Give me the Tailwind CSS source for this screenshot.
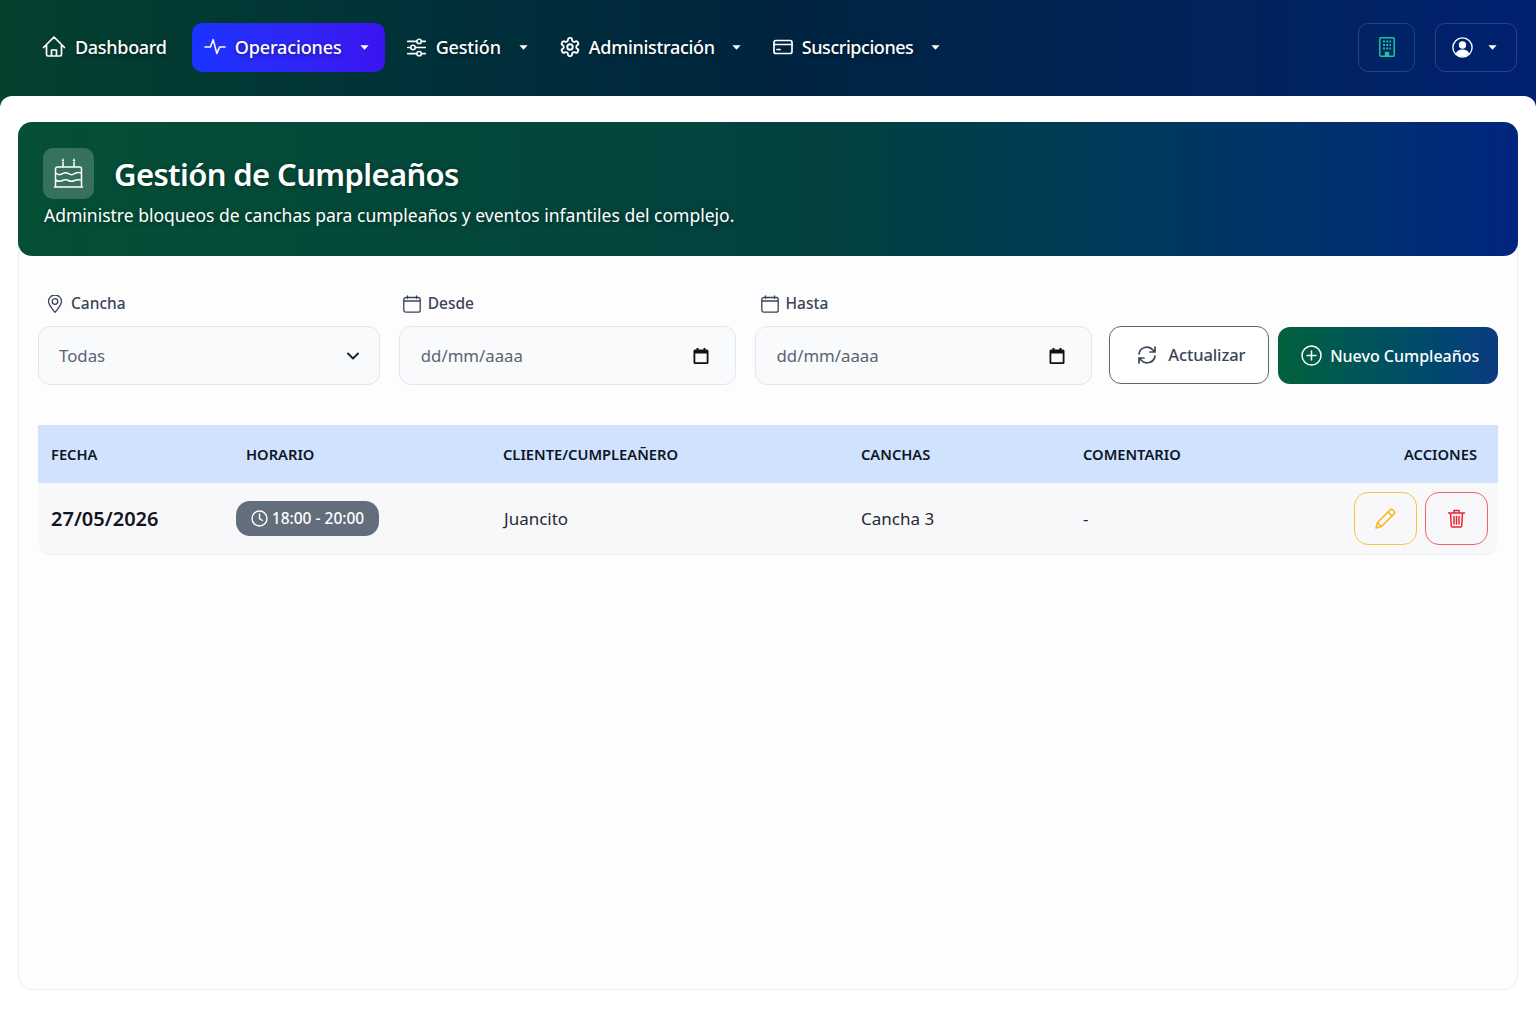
<!DOCTYPE html>
<html lang="es">
<head>
<meta charset="utf-8">
<title>Gestión de Cumpleaños</title>
<script src="https://cdn.jsdelivr.net/npm/@tailwindcss/browser@4"></script>
</head>
<body class="h-[1024px] w-[1536px] overflow-hidden bg-gradient-to-r from-[#06402e] via-[#00243f] to-[#002070] font-['Noto_Sans','Liberation_Sans',sans-serif]">
<nav class="flex h-[96px] items-center pb-[2px] pl-[32px] pr-[19px] text-[18px] font-medium tracking-[-0.3px] text-white [text-shadow:0_1px_4px_rgba(0,0,0,0.45)]">
  <a class="flex h-[49px] items-center gap-[9px] px-[10px]">
    <svg class="size-[24px]" viewBox="0 0 24 24" fill="none" stroke="currentColor" stroke-width="1.7" stroke-linecap="round" stroke-linejoin="round"><path d="M1.500 12.500 12 2l10.500 10.500M4.500 10v9.500a1.500 1.500 0 0 0 1.500 1.500h12a1.500 1.500 0 0 0 1.500-1.500V10M9.500 21v-6h5v6"/></svg>
    <span>Dashboard</span>
  </a>
  <a class="ml-[15px] flex h-[49px] w-[193px] items-center rounded-[10px] bg-gradient-to-r from-[#1a33ff] to-[#3a14f0] pl-[12px]">
    <svg class="size-[22px]" viewBox="0 0 24 24" fill="none" stroke="currentColor" stroke-width="1.700" stroke-linecap="round" stroke-linejoin="round"><path d="M1 12h6l3-8 4 15 3-7h6"/></svg>
    <span class="ml-[9px] tracking-[-0.12px]">Operaciones</span>
    <svg class="ml-[17px] size-[11px]" viewBox="0 0 12 12" fill="currentColor"><path d="M1.500 3.500h9L6 8.500z"/></svg>
  </a>
  <a class="ml-[11px] flex h-[49px] items-center pl-[10px]">
    <svg class="size-[21px]" viewBox="0 0 24 24" fill="none" stroke="currentColor" stroke-width="1.800" stroke-linecap="round"><path d="M2 5h10M18 5h4M2 12h3M11 12h11M2 19h10M18 19h4"/><circle cx="15" cy="5" r="2.500"/><circle cx="8" cy="12" r="2.500"/><circle cx="15" cy="19" r="2.500"/></svg>
    <span class="ml-[9px] tracking-[-0.15px]">Gestión</span>
    <svg class="ml-[17px] size-[11px]" viewBox="0 0 12 12" fill="currentColor"><path d="M1.500 3.500h9L6 8.500z"/></svg>
  </a>
  <a class="ml-[20px] flex h-[49px] items-center pl-[10px]">
    <svg class="size-[22px]" viewBox="0 0 24 24" fill="none" stroke="currentColor" stroke-width="2" stroke-linecap="round" stroke-linejoin="round"><path d="M12.220 2h-.44a2 2 0 0 0-2 2v.18a2 2 0 0 1-1 1.730l-.43.25a2 2 0 0 1-2 0l-.15-.08a2 2 0 0 0-2.730.73l-.22.38a2 2 0 0 0 .73 2.730l.15.1a2 2 0 0 1 1 1.720v.51a2 2 0 0 1-1 1.740l-.15.09a2 2 0 0 0-.73 2.730l.22.38a2 2 0 0 0 2.730.73l.15-.08a2 2 0 0 1 2 0l.43.25a2 2 0 0 1 1 1.730V20a2 2 0 0 0 2 2h.44a2 2 0 0 0 2-2v-.18a2 2 0 0 1 1-1.730l.43-.25a2 2 0 0 1 2 0l.15.08a2 2 0 0 0 2.730-.73l.22-.39a2 2 0 0 0-.73-2.730l-.15-.08a2 2 0 0 1-1-1.740v-.5a2 2 0 0 1 1-1.740l.15-.09a2 2 0 0 0 .73-2.730l-.22-.38a2 2 0 0 0-2.730-.73l-.15.08a2 2 0 0 1-2 0l-.43-.25a2 2 0 0 1-1-1.730V4a2 2 0 0 0-2-2z"/><circle cx="12" cy="12" r="3"/></svg>
    <span class="ml-[8px]">Administración</span>
    <svg class="ml-[16px] size-[11px]" viewBox="0 0 12 12" fill="currentColor"><path d="M1.500 3.500h9L6 8.500z"/></svg>
  </a>
  <a class="ml-[21px] flex h-[49px] items-center pl-[10px]">
    <svg class="size-[20px]" viewBox="0 0 20 20" fill="none" stroke="currentColor" stroke-width="1.700" stroke-linecap="round"><rect x="1" y="3.500" width="18" height="13" rx="2"/><path d="M1 7.500h18M4 12.500h3"/></svg>
    <span class="ml-[9px] tracking-[-0.45px]">Suscripciones</span>
    <svg class="ml-[17px] size-[11px]" viewBox="0 0 12 12" fill="currentColor"><path d="M1.500 3.500h9L6 8.500z"/></svg>
  </a>
  <button class="ml-auto flex h-[49px] w-[57px] items-center justify-center rounded-[10px] border border-white/15">
    <svg class="h-[20px] w-[16px] text-[#14c99a]" viewBox="0 0 16 20" fill="none" stroke="currentColor" stroke-width="1.500"><rect x=".8" y=".8" width="14.400" height="18.400" rx="1"/><path stroke-width="2" stroke-dasharray="2 1.200" d="M4 4.500h8M4 8h8M4 11.500h8"/><path fill="currentColor" d="M6.500 19v-3.500h3V19z"/></svg>
  </button>
  <button class="ml-[20px] flex h-[49px] w-[82px] items-center rounded-[10px] border border-white/15 pl-[16px]">
    <svg class="size-[21px]" viewBox="0 0 21 21" fill="none"><circle cx="10.500" cy="10.500" r="9.600" stroke="white" stroke-width="1.400"/><circle cx="10.500" cy="8" r="3.700" fill="white"/><path fill="white" d="M3.800 16.500c1-2.800 3.500-4 6.700-4s5.700 1.200 6.700 4c-1.700 2-4 3.300-6.700 3.300s-5-1.300-6.700-3.300z"/></svg>
    <svg class="ml-[14px] size-[11px] text-white" viewBox="0 0 12 12" fill="currentColor"><path d="M1.500 3.500h9L6 8.500z"/></svg>
  </button>
</nav>
<main class="h-[928px] rounded-t-[12px] bg-white px-[18px] pt-[26px]">
  <section class="h-[868px] rounded-[14px] border border-[#edeff3] bg-[#fdfdfe]">
    <header class="-mx-px -mt-px h-[134px] rounded-[14px] bg-gradient-to-r from-[#054f35] via-[#03403f] via-55% to-[#02257f] pl-[25px] pt-[26px] text-white [text-shadow:0_1px_5px_rgba(0,0,0,0.35)]">
      <div class="flex items-start gap-[20px]">
        <div class="flex size-[51px] items-center justify-center rounded-[10px] bg-white/20">
          <svg class="size-[33px]" viewBox="0 0 33 33" fill="none" stroke="white" stroke-width="1.500" stroke-linecap="round" stroke-linejoin="round"><path d="M11 5v4.500M22 5v4.500M2.500 30h28M3.500 30V12a2 2 0 0 1 2-2h22a2 2 0 0 1 2 2v18M3.500 16c2.500 2 5 2 7 .7s4-1.300 6 0 4 1.300 6 0 4.500-1.500 7-.7M3.500 23c2.500 1.500 5 1.500 7 .5s4-1 6 0 4 1 6 0 4.500-1 7-.5"/><path fill="white" stroke="none" d="M11 1l1.400 3h-2.800zM22 1l1.400 3h-2.800z"/></svg>
        </div>
        <h1 class="mt-[1px] text-[31px] leading-[51px] font-semibold tracking-[-0.62px]">Gestión de Cumpleaños</h1>
      </div>
      <p class="mt-[1px] pl-px text-[17.5px] leading-[28px]">Administre bloqueos de canchas para cumpleaños y eventos infantiles del complejo.</p>
    </header>

    <div class="flex items-end px-[19px] pt-[36px]">
      <div class="w-[342px]">
        <label class="flex h-[24px] items-center pl-[8px] text-[15.5px] font-medium text-[#3a4556]">
          <svg class="size-[18px]" viewBox="0 0 18 18" fill="none" stroke="currentColor" stroke-width="1.300" stroke-linejoin="round"><path d="M9 17.300c3.500-4.300 6.500-7.500 6.500-10.800a6.500 6.500 0 0 0-13 0c0 3.300 3 6.500 6.500 10.800z"/><circle cx="9" cy="6.500" r="2.800"/></svg>
          <span class="ml-[7px]">Cancha</span>
        </label>
        <div class="mt-[10px] flex h-[59px] items-center justify-between rounded-[12px] border border-[#e2e6ee] bg-[#f9fafc] pl-[20px] pr-[18px] text-[16.800px] text-[#5a6472]">
          <span>Todas</span>
          <svg class="size-[16px] text-[#1a2233]" viewBox="0 0 16 16" fill="none" stroke="currentColor" stroke-width="2" stroke-linecap="round" stroke-linejoin="round"><path d="M3 5.500 8 10.500l5-5"/></svg>
        </div>
      </div>
      <div class="ml-[19px] w-[337px]">
        <label class="flex h-[24px] items-center pl-[4px] text-[15.5px] font-medium text-[#3a4556]">
          <svg class="size-[18px]" viewBox="0 0 18 18" fill="none" stroke="currentColor" stroke-width="1.300" stroke-linecap="round"><rect x=".8" y="2.500" width="16.400" height="14.700" rx="2"/><path d="M.8 6h16.400M4.500 .8v2.500M13.500 .8v2.500"/></svg>
          <span class="ml-[7px]">Desde</span>
        </label>
        <div class="mt-[10px] flex h-[59px] items-center justify-between rounded-[12px] border border-[#e2e6ee] bg-[#f9fafc] pl-[21px] pr-[26px] text-[16.800px] text-[#5a6472]">
          <span>dd/mm/aaaa</span>
          <svg class="size-[16px] text-[#111]" viewBox="0 0 16 16" fill="currentColor"><path fill-rule="evenodd" d="M3.500 0h2v1.500h5V0h2v1.500H14A1.500 1.500 0 0 1 15.500 3v11.500A1.500 1.500 0 0 1 14 16H2A1.500 1.500 0 0 1 .5 14.500V3A1.500 1.500 0 0 1 2 1.500h1.500zM2.300 5.500v8.700h11.400V5.500z"/></svg>
        </div>
      </div>
      <div class="ml-[19px] w-[338px]">
        <label class="flex h-[24px] items-center pl-[6px] text-[15.5px] font-medium text-[#3a4556]">
          <svg class="size-[18px]" viewBox="0 0 18 18" fill="none" stroke="currentColor" stroke-width="1.300" stroke-linecap="round"><rect x=".8" y="2.500" width="16.400" height="14.700" rx="2"/><path d="M.8 6h16.400M4.500 .8v2.500M13.500 .8v2.500"/></svg>
          <span class="ml-[7px]">Hasta</span>
        </label>
        <div class="mt-[10px] flex h-[59px] items-center justify-between rounded-[12px] border border-[#e2e6ee] bg-[#f9fafc] pl-[21px] pr-[26px] text-[16.800px] text-[#5a6472]">
          <span>dd/mm/aaaa</span>
          <svg class="size-[16px] text-[#111]" viewBox="0 0 16 16" fill="currentColor"><path fill-rule="evenodd" d="M3.500 0h2v1.500h5V0h2v1.500H14A1.500 1.500 0 0 1 15.500 3v11.500A1.500 1.500 0 0 1 14 16H2A1.500 1.500 0 0 1 .5 14.500V3A1.500 1.500 0 0 1 2 1.500h1.500zM2.300 5.500v8.700h11.400V5.500z"/></svg>
        </div>
      </div>
      <button class="mb-px ml-[17px] flex h-[58px] w-[160px] items-center gap-[11px] rounded-[12px] border border-[#596678] bg-white pl-[27px] text-[16.500px] font-medium tracking-[-0.1px] text-[#3a4556]">
        <svg class="size-[20px]" viewBox="0 0 20 20" fill="none" stroke="currentColor" stroke-width="1.700" stroke-linecap="round" stroke-linejoin="round"><path d="M2 9a8 8 0 0 1 14-4l2 2M18 2v5h-5M18 11a8 8 0 0 1-14 4l-2-2M2 18v-5h5"/></svg>
        <span>Actualizar</span>
      </button>
      <button class="mb-px ml-[9px] flex h-[57px] w-[220px] items-center gap-[8px] rounded-[12px] bg-gradient-to-r from-[#04613a] to-[#0c3a80] pl-[23px] text-[16px] font-medium text-white">
        <svg class="size-[21px]" viewBox="0 0 21 21" fill="none" stroke="currentColor" stroke-width="1.500" stroke-linecap="round"><circle cx="10.500" cy="10.500" r="9.500"/><path d="M10.500 6v9M6 10.500h9"/></svg>
        <span>Nuevo Cumpleaños</span>
      </button>
    </div>

    <div class="mx-[19px] mt-[40px] overflow-hidden rounded-b-[14px] border-b border-[#e9ebf0]">
      <table class="w-full table-fixed border-collapse text-left">
        <colgroup><col class="w-[195px]"><col class="w-[257px]"><col class="w-[358px]"><col class="w-[222px]"><col class="w-[267px]"><col></colgroup>
        <thead class="bg-[#d1e2fe] text-[14.700px] text-[#0e1626]">
          <tr class="h-[58px]">
            <th class="px-[13px] font-semibold">FECHA</th>
            <th class="px-[13px] font-semibold">HORARIO</th>
            <th class="px-[13px] font-semibold">CLIENTE/CUMPLEAÑERO</th>
            <th class="px-[13px] font-semibold">CANCHAS</th>
            <th class="px-[13px] font-semibold">COMENTARIO</th>
            <th class="pr-[21px] text-right font-semibold">ACCIONES</th>
          </tr>
        </thead>
        <tbody class="bg-[#f8f8fa] text-[17px] text-[#1f2937]">
          <tr class="h-[71px]">
            <td class="px-[13px] text-[20px] font-semibold text-[#10151f]">27/05/2026</td>
            <td class="px-[3px]">
              <span class="inline-flex h-[35px] w-[143px] items-center justify-center gap-[4px] rounded-[14px] bg-[#636e7c] text-[15.5px] font-medium text-white">
                <svg class="size-[17px]" viewBox="0 0 17 17" fill="none" stroke="currentColor" stroke-width="1.400" stroke-linecap="round" stroke-linejoin="round"><circle cx="8.500" cy="8.500" r="7.500"/><path d="M8.500 4v4.700l3 1.800"/></svg>
                18:00 - 20:00
              </span>
            </td>
            <td class="pl-[14px] pr-[13px]">Juancito</td>
            <td class="px-[13px]">Cancha 3</td>
            <td class="px-[13px]">-</td>
            <td class="pr-[10px]">
              <div class="flex justify-end gap-[8px]">
                <button class="flex h-[53px] w-[63px] items-center justify-center rounded-[14px] border border-[#f6c445] text-[#f5b91f]">
                  <svg class="size-[21px]" viewBox="0 0 21 21" fill="none" stroke="currentColor" stroke-width="1.600" stroke-linejoin="round"><path d="M1 20l1.500-5.500L15 2a2 2 0 0 1 2.800 0l1.200 1.200a2 2 0 0 1 0 2.800L6.500 18.500zM13 4l4 4M2.500 14.500l4 4"/></svg>
                </button>
                <button class="flex h-[53px] w-[63px] items-center justify-center rounded-[14px] border border-[#ee6468] text-[#e8252c]">
                  <svg class="size-[19px]" viewBox="0 0 19 19" fill="none" stroke="currentColor" stroke-width="1.500" stroke-linecap="round" stroke-linejoin="round"><path d="M1.500 4h16M7 4V1.500h5V4M3.500 4l.8 13a1 1 0 0 0 1 1h8.400a1 1 0 0 0 1-1l.8-13M7 7.500v7.500M9.500 7.500v7.500M12 7.500v7.500"/></svg>
                </button>
              </div>
            </td>
          </tr>
        </tbody>
      </table>
    </div>
  </section>
</main>
</body>
</html>
